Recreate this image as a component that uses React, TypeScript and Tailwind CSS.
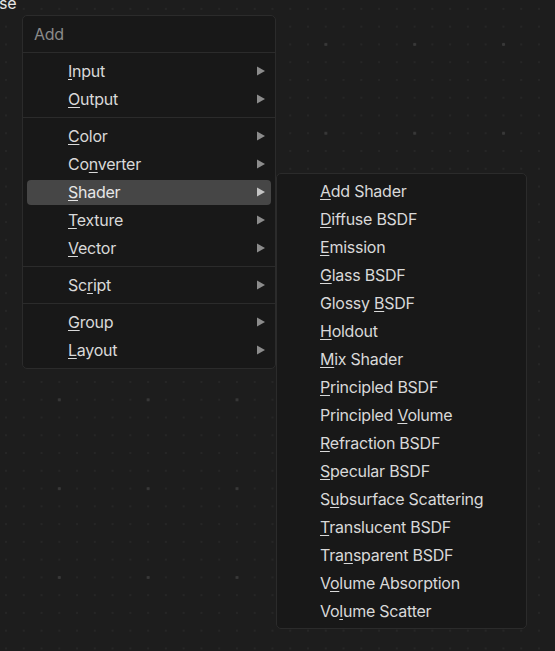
import React from 'react';

type Entry = { label: string; key: number } | 'sep';

// main Add menu; key = index of the underlined mnemonic letter
const MAIN: Entry[] = [
  { label: 'Input', key: 0 },
  { label: 'Output', key: 0 },
  'sep',
  { label: 'Color', key: 0 },
  { label: 'Converter', key: 2 },
  { label: 'Shader', key: 0 },
  { label: 'Texture', key: 0 },
  { label: 'Vector', key: 0 },
  'sep',
  { label: 'Script', key: 2 },
  'sep',
  { label: 'Group', key: 0 },
  { label: 'Layout', key: 0 },
];

const SHADERS = [
  { label: 'Add Shader', key: 0 },
  { label: 'Diffuse BSDF', key: 0 },
  { label: 'Emission', key: 0 },
  { label: 'Glass BSDF', key: 0 },
  { label: 'Glossy BSDF', key: 7 },
  { label: 'Holdout', key: 0 },
  { label: 'Mix Shader', key: 0 },
  { label: 'Principled BSDF', key: 0 },
  { label: 'Principled Volume', key: 11 },
  { label: 'Refraction BSDF', key: 0 },
  { label: 'Specular BSDF', key: 0 },
  { label: 'Subsurface Scattering', key: 1 },
  { label: 'Translucent BSDF', key: 0 },
  { label: 'Transparent BSDF', key: 3 },
  { label: 'Volume Absorption', key: 1 },
  { label: 'Volume Scatter', key: 2 },
];

function Mnemonic({ label, index }: { label: string; index: number }) {
  return (
    <span className="whitespace-pre">
      {label.slice(0, index)}
      <span className="underline decoration-1 underline-offset-[2px]">{label[index]}</span>
      {label.slice(index + 1)}
    </span>
  );
}

function Arrow({ active }: { active?: boolean }) {
  return (
    <svg width="8" height="10" viewBox="0 0 8 10" className={active ? 'text-[#c4c4c4]' : 'text-[#8c8c8c]'}>
      <path d="M0 0.5 L8 5 L0 9.5 Z" fill="currentColor" />
    </svg>
  );
}

function MenuRow({
  label,
  index,
  active,
  arrow,
  indent = 'pl-[41px]',
}: {
  label: string;
  index: number;
  active?: boolean;
  arrow?: boolean;
  indent?: string;
}) {
  return (
    <div className="h-[28px] px-[4px] flex items-center">
      <div
        className={`h-[25px] w-full rounded-[4px] flex items-center pr-[6px] ${indent} ${
          active ? 'bg-[#464646] text-[#e6e6e6]' : 'text-[#d9d9d9]'
        }`}
      >
        <Mnemonic label={label} index={index} />
        {arrow && (
          <span className="ml-auto flex">
            <Arrow active={active} />
          </span>
        )}
      </div>
    </div>
  );
}

export default function App() {
  return (
    <div
      className="relative w-[555px] h-[651px] overflow-hidden bg-[#1d1d1d] text-[16px] leading-none tracking-[-0.25px] [font-family:Inter,'Noto_Sans',sans-serif] bg-[radial-gradient(circle,#383838_1.3px,transparent_1.8px),radial-gradient(circle,#262626_1px,transparent_1.4px)] [background-size:88.85px_88.85px,17.77px_17.77px] [background-position:14.9px_0px,-2.9px_0px]"
    >
      {/* clipped label from the editor header */}
      <div className="-mt-[5px] -ml-[1px] text-[#e6e6e6]">se</div>

      {/* Add menu */}
      <div className="absolute left-[22px] top-[15px] w-[254px] rounded-[5px] border border-[#2b2b2b] bg-[#181818] pb-[4px]">
        <div className="h-[37px] flex items-center pl-[11px] text-[#8a8a8a] border-b border-[#2b2b2b]">Add</div>
        <div className="pt-[4px]">
          {MAIN.map((e, i) =>
            e === 'sep' ? (
              <div key={i} className="py-[4px]">
                <div className="h-px bg-[#2b2b2b]" />
              </div>
            ) : (
              <MenuRow key={i} label={e.label} index={e.key} arrow active={e.label === 'Shader'} />
            )
          )}
        </div>
      </div>

      {/* Shader submenu */}
      <div className="absolute left-[276px] top-[173px] w-[251px] rounded-[5px] border border-[#2b2b2b] bg-[#181818] py-[3px]">
        {SHADERS.map((s) => (
          <MenuRow key={s.label} label={s.label} index={s.key} indent="pl-[39px]" />
        ))}
      </div>
    </div>
  );
}
